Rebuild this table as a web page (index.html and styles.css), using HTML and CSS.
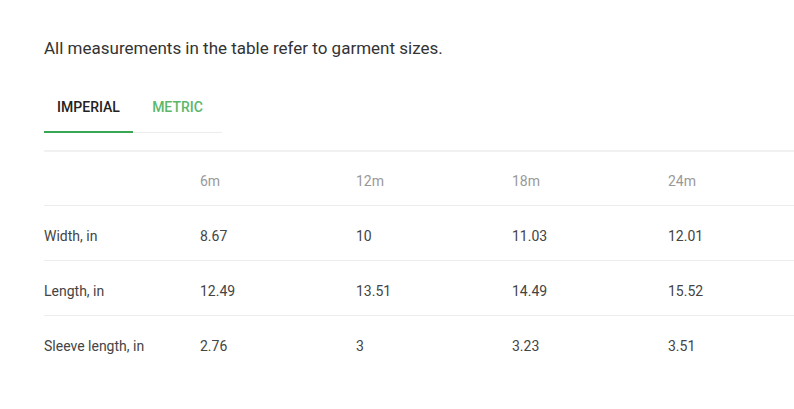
FILE: index.html
```html
<!DOCTYPE html>
<html lang="en">
<head>
<meta charset="utf-8">
<title>Size guide</title>
<link rel="stylesheet" href="styles.css">
</head>
<body>
<div class="page">
  <p class="intro">All measurements in the table refer to garment sizes.</p>
  <div class="tabs">
    <div class="tab active">IMPERIAL</div>
    <div class="tab">METRIC</div>
  </div>
  <table class="sizes">
    <thead>
      <tr><th></th><th>6m</th><th>12m</th><th>18m</th><th>24m</th></tr>
    </thead>
    <tbody>
      <tr><td>Width, in</td><td>8.67</td><td>10</td><td>11.03</td><td>12.01</td></tr>
      <tr><td>Length, in</td><td>12.49</td><td>13.51</td><td>14.49</td><td>15.52</td></tr>
      <tr><td>Sleeve length, in</td><td>2.76</td><td>3</td><td>3.23</td><td>3.51</td></tr>
    </tbody>
  </table>
</div>
</body>
</html>
```

FILE: styles.css
```css
html, body {
  margin: 0;
  padding: 0;
  background: #fff;
  overflow: hidden;
}
body {
  font-family: Roboto, "Liberation Sans", Arial, sans-serif;
  color: #333;
}
.page {
  padding: 37px 0 0 44px;
}
.intro {
  margin: 0;
  font-size: 17px;
  line-height: 22px;
  color: #333;
}
.tabs {
  display: flex;
  margin-top: 36px;
  width: 178px;
  border-bottom: 1px solid #ececec;
}
.tab {
  width: 89px;
  box-sizing: border-box;
  text-align: center;
  font-size: 14px;
  font-weight: 500;
  line-height: 16px;
  padding: 4px 0 16px;
  color: #5cb76a;
  margin-bottom: -1px;
  border-bottom: 2px solid transparent;
}
.tab.active {
  color: #222;
  border-bottom-color: #3aa552;
}
.sizes {
  margin-top: 17px;
  border-collapse: collapse;
  table-layout: fixed;
  width: 780px;
  font-size: 14px;
}
.sizes th, .sizes td {
  width: 156px;
  text-align: left;
  padding: 5px 0 0;
  height: 49px;
  vertical-align: middle;
  line-height: 16px;
}
.sizes th {
  height: 48px;
  font-weight: 400;
  color: #999;
  border-top: 2px solid #f1f1f1;
}
.sizes td {
  color: #444;
  border-top: 1px solid #ececec;
}
```
